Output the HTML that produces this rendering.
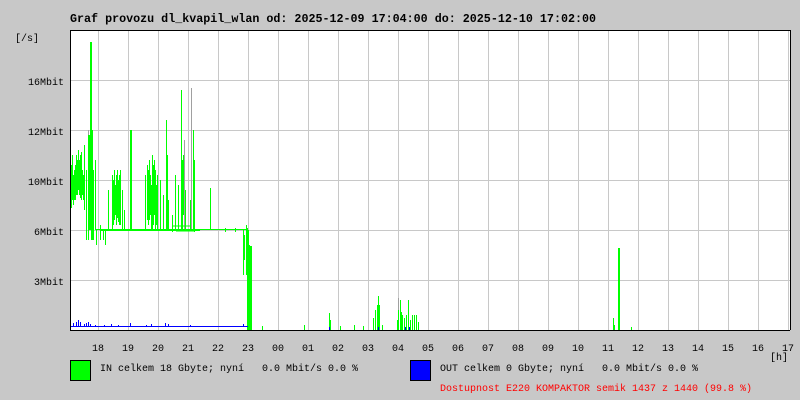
<!DOCTYPE html>
<html><head><meta charset="utf-8"><style>
html,body{margin:0;padding:0;background:#c8c8c8;}
svg{display:block}
text{font-family:"Liberation Mono","DejaVu Sans Mono",monospace;font-size:10px;fill:#000;white-space:pre}
</style></head><body>
<svg width="800" height="400" viewBox="0 0 800 400" xmlns="http://www.w3.org/2000/svg" xml:space="preserve">
<rect width="800" height="400" fill="#c8c8c8"/>
<text x="70" y="22" style="font-size:11.7px;font-weight:bold">Graf provozu dl_kvapil_wlan od: 2025-12-09 17:04:00 do: 2025-12-10 17:02:00</text>
<rect x="70" y="30" width="720" height="300" fill="#fff"/>
<g stroke="#c8c8c8" stroke-width="1" shape-rendering="crispEdges">
<path d="M98.5 30V330M128.5 30V330M158.5 30V330M188.5 30V330M218.5 30V330M248.5 30V330M278.5 30V330M308.5 30V330M338.5 30V330M368.5 30V330M398.5 30V330M428.5 30V330M458.5 30V330M488.5 30V330M518.5 30V330M548.5 30V330M578.5 30V330M608.5 30V330M638.5 30V330M668.5 30V330M698.5 30V330M728.5 30V330M758.5 30V330M788.5 30V330"/>
<path d="M70 80.5H790M70 130.5H790M70 180.5H790M70 230.5H790M70 280.5H790"/>
</g>
<g stroke="#a0a0a0" stroke-width="1" shape-rendering="crispEdges">
<path d="M88.5 130V240M191.5 88V230M398.5 298V330M184.5 140V230"/>
</g>
<g stroke="#00ff00" stroke-width="1" fill="none" shape-rendering="crispEdges">
<path d="M95 229.5H248M100 230.5H200"/>
<path d="M70.5 160V205M71.5 165V208M72.5 155V200M73.5 175V205M74.5 170V200M75.5 165V200M76.5 155V195M77.5 160V195M78.5 150V190M79.5 160V195M80.5 155V198M81.5 152V200M82.5 170V195M83.5 175V200M84.5 145V210M86.5 170V240M88.5 135V240M89.5 135V230M90.5 42V230M91.5 42V240M92.5 130V240M93.5 170V240M95.5 160V230M96.5 230V245M100.5 225V240M103.5 230V240M105.5 230V245"/>
<path d="M108.5 190V230M112.5 175V230M113.5 180V225M114.5 170V220M115.5 185V215M116.5 175V225M117.5 170V218M118.5 180V222M119.5 175V225M120.5 170V225M122.5 190V230M124.5 210V230M130.5 130V230M131.5 130V230"/>
<path d="M145.5 175V230M147.5 165V220M148.5 170V225M149.5 160V220M150.5 175V215M151.5 185V230M152.5 155V230M153.5 165V225M154.5 160V215M155.5 170V230M156.5 185V225M157.5 175V230M160.5 180V230M163.5 195V230M166.5 120V230M167.5 155V230M168.5 200V230M172.5 215V232M175.5 175V230M178.5 185V230M181.5 90V230M182.5 160V230M183.5 155V215M185.5 190V230M190.5 200V230M193.5 130V230M194.5 160V232"/>
<path d="M172 226H190M176 231H195M210.5 188V230M225.5 228V232M235.5 228V232M243.5 230V275M244.5 235V260M246.5 225V275M247.5 228V330M248.5 230V330M249.5 245V330M250.5 246V330M251.5 246V330"/>
<path d="M262.5 326V330M304.5 325V330M329.5 313V330M330.5 320V330M340.5 326V330M354.5 325V330M363.5 326V330M373.5 318V330M375.5 310V330M377.5 305V330M378.5 296V330M379.5 305V330M382.5 325V330M397.5 320V330M398.5 310V330M400.5 300V330M401.5 312V330M402.5 315V330M404.5 318V330M406.5 315V330M408.5 300V330M410.5 320V330M412.5 315V330M414.5 315V330M416.5 315V330M418.5 322V330M613.5 318V330M614.5 325V330M618.5 248V330M619.5 248V330M631.5 327V330"/>
</g>
<g stroke="#0000ff" stroke-width="1" fill="none" shape-rendering="crispEdges">
<path d="M70 326.5H248M70.5 324V327M73.5 323V327M76.5 322V327M78.5 320V327M80.5 322V327M84.5 324V327M86.5 323V327M88.5 322V327M90.5 324V327M95.5 325V327M104.5 325V327M111.5 324V327M118.5 325V327M130.5 323V327M146.5 325V327M151.5 324V327M165.5 323V327M168.5 324V327M190.5 325V327M243.5 324V327M329.5 327V330M378.5 327V330M405.5 327V330M409.5 327V330"/>
</g>
<path d="M70.5 30V330.5H790M70 30.5H790.5V330" stroke="#000" stroke-width="1" fill="none" shape-rendering="crispEdges"/>
<text x="15" y="41">[/s]</text>
<g text-anchor="end">
<text x="64" y="85">16Mbit</text>
<text x="64" y="135">12Mbit</text>
<text x="64" y="185">10Mbit</text>
<text x="64" y="235">6Mbit</text>
<text x="64" y="285">3Mbit</text>
</g>
<g text-anchor="middle">
<text x="98" y="351">18</text><text x="128" y="351">19</text><text x="158" y="351">20</text><text x="188" y="351">21</text><text x="218" y="351">22</text><text x="248" y="351">23</text><text x="278" y="351">00</text><text x="308" y="351">01</text><text x="338" y="351">02</text><text x="368" y="351">03</text><text x="398" y="351">04</text><text x="428" y="351">05</text><text x="458" y="351">06</text><text x="488" y="351">07</text><text x="518" y="351">08</text><text x="548" y="351">09</text><text x="578" y="351">10</text><text x="608" y="351">11</text><text x="638" y="351">12</text><text x="668" y="351">13</text><text x="698" y="351">14</text><text x="728" y="351">15</text><text x="758" y="351">16</text><text x="788" y="351">17</text>
</g>
<text x="770" y="360">[h]</text>
<rect x="70.5" y="360.5" width="20" height="20" fill="#00ff00" stroke="#000"/>
<text x="100" y="371">IN celkem 18 Gbyte; nyní   0.0 Mbit/s 0.0 %</text>
<rect x="410.5" y="360.5" width="20" height="20" fill="#0000ff" stroke="#000"/>
<text x="440" y="371">OUT celkem 0 Gbyte; nyní   0.0 Mbit/s 0.0 %</text>
<text x="440" y="391" style="fill:#ff0000">Dostupnost E220 KOMPAKTOR semik 1437 z 1440 (99.8 %)</text>
</svg>
</body></html>
